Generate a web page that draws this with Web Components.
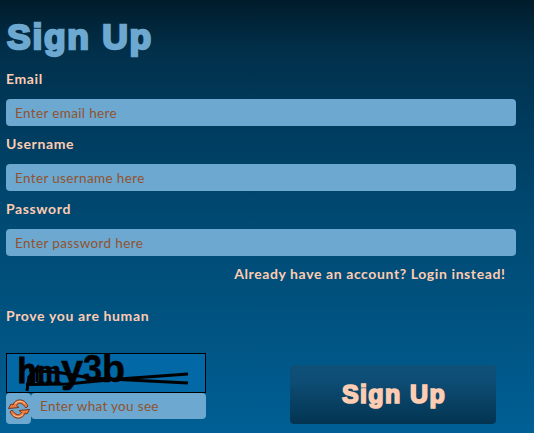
<!DOCTYPE html>
<html lang="en"><head><meta charset="utf-8"><title>Sign Up</title>
<style>
html,body{margin:0;height:100%;overflow:hidden}
body{font:13.5px/20px Lato,"Open Sans",sans-serif;color:#fdccb2}
</style></head><body>
<sign-up-page></sign-up-page>
<script>
const define=(name,html)=>customElements.define(name,class extends HTMLElement{
  constructor(){super();const t=document.createElement('template');t.innerHTML=html;this.attachShadow({mode:'open'}).append(t.content.cloneNode(true));}
});
define('text-field',`<style>
:host{display:flex;align-items:center;box-sizing:border-box;height:27px;padding:0 9px;border-radius:4px;background:#6ca8cf;color:#91532f;font-size:13.5px;letter-spacing:.36px;white-space:nowrap}
</style><slot></slot>`);
define('form-row',`<style>
:host{display:block;height:65px}
.label{height:20px;margin-bottom:10px;font-size:14px;font-weight:700;letter-spacing:.62px}
</style><div class="label"><slot name="label"></slot></div><slot></slot>`);
define('heading-text',`<style>
:host{display:block;padding-left:1px;font:700 35.5px/37px "Liberation Sans",sans-serif;color:#6ca8cf;-webkit-text-stroke:2.4px #6ca8cf;letter-spacing:1.7px;white-space:nowrap}
</style><slot></slot>`);
define('submit-button',`<style>
:host{display:flex;align-items:center;justify-content:center;box-sizing:border-box;width:206px;height:59px;border-radius:4px;background:linear-gradient(#0e5078 0%,#0e4e76 25%,#033451 100%);color:#fdccb2;font:700 25px/30px "Liberation Sans",sans-serif;-webkit-text-stroke:1.7px #fdccb2;letter-spacing:1.4px;padding:0 0 2px 2px}
</style><slot></slot>`);
define('captcha-image',`<style>
:host{display:block;box-sizing:border-box;width:200px;height:40px;border:1px solid #000;background:#0268a6}svg{display:block;overflow:visible}
</style><svg width="198" height="38" viewBox="7 354 198 38">
<g fill="#000" stroke="#000" stroke-width=".5" font-weight="700">
<text x="17.500" y="382.500" font-family="Liberation Mono" font-size="35" textLength="19" lengthAdjust="spacingAndGlyphs" stroke-width="1">h</text>
<text x="37" y="382.500" font-family="Liberation Serif" font-size="35" textLength="24" lengthAdjust="spacingAndGlyphs">m</text>
<text x="61" y="382" font-family="Liberation Sans" font-size="38" textLength="22" lengthAdjust="spacingAndGlyphs">y</text>
<text x="83" y="382" font-family="Liberation Sans" font-size="38" textLength="19" lengthAdjust="spacingAndGlyphs">3</text>
<text x="102" y="382" font-family="Liberation Sans" font-size="38" textLength="23" lengthAdjust="spacingAndGlyphs">b</text></g>
<g fill="none" stroke="#000" stroke-width="3"><path d="M29 370L62 373L90 378L188 383"/><path d="M27 391L29 377L37 368V382"/><path d="M26 384.500L67 384L119 379L188 374"/></g></svg>`);
define('refresh-button',`<style>
:host{display:grid;place-items:center;width:25px;height:31px;border-radius:4px;background:#6ca8cf}
</style><svg width="22" height="22" viewBox="0 0 22 22" stroke="#74351c" stroke-width="1" stroke-linejoin="round">
<path fill="#ee7c40" d="M3 6L5 7C7 .5 16 -.5 20 8L18 10C14 4.500 11 4 8.500 7.500L11 9.500L.500 10.500Z"/>
<path fill="#ee7c40" d="M19 16L17 15C15 21.500 6 22.500 2 14L4 12C8 17.500 11 18 13.500 14.500L11 12.500L21.500 11.500Z"/>
<path fill="none" stroke="#ffc397" d="M7 5.500Q12 .8 17 5.500M15 16.500Q10 21.200 5 16.500"/></svg>`);
define('sign-up-page',`<style>
:host{display:block;box-sizing:border-box;width:534px;height:433px;padding:19px 18px 0 6px;background:linear-gradient(#011c2b 0,#01304b 12%,#003a5c 27%,#004a73 52%,#00527f 72%,#005f95 100%)}
heading-text{height:50px}
.login{height:20px;padding-right:10.5px;text-align:right;font-size:14px;font-weight:700;letter-spacing:.6px}
.human{margin-top:22px;height:20px;font-size:14px;font-weight:700;letter-spacing:.64px}
.bottom{display:flex;justify-content:space-between;margin-top:27px;padding-right:20px}
.answer{display:flex}.answer text-field{width:175px;height:26px;letter-spacing:.32px}
submit-button{margin-top:12px}
</style><heading-text>Sign Up</heading-text>
<form-row><span slot="label">Email</span><text-field>Enter email here</text-field></form-row>
<form-row><span slot="label">Username</span><text-field>Enter username here</text-field></form-row>
<form-row><span slot="label">Password</span><text-field>Enter password here</text-field></form-row>
<div class="login">Already have an account? Login instead!</div>
<div class="human">Prove you are human</div>
<div class="bottom"><div><captcha-image></captcha-image><div class="answer"><refresh-button></refresh-button><text-field>Enter what you see</text-field></div></div><submit-button>Sign Up</submit-button></div>`);
</script></body></html>
